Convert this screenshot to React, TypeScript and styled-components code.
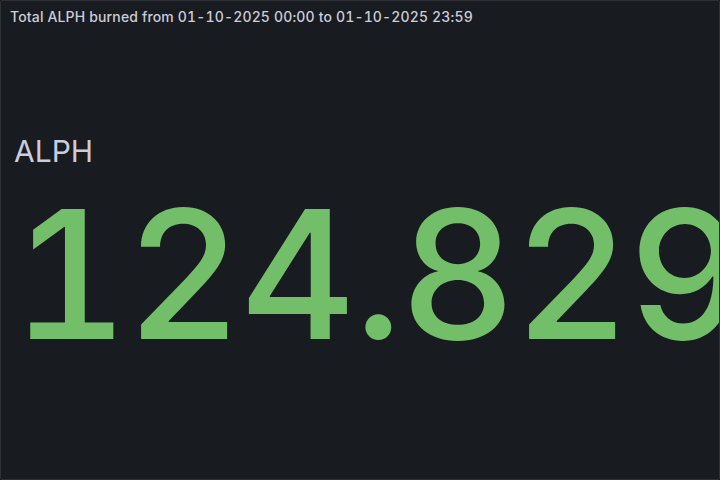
import styled, { createGlobalStyle } from "styled-components";

const GlobalStyle = createGlobalStyle`
  html, body {
    margin: 0;
    padding: 0;
    background: #111217;
  }
  body {
    font-family: Inter, "Noto Sans", sans-serif;
  }
`;

const App = () => {
  return (
    <>
      <GlobalStyle />
      <Panel>
        <PanelHeader>
          <PanelTitle>Total ALPH burned from 01-10-2025 00:00 to 01-10-2025 23:59</PanelTitle>
        </PanelHeader>
        <PanelContent>
          <StatLabel>ALPH</StatLabel>
          <StatValue>124.829</StatValue>
        </PanelContent>
      </Panel>
    </>
  );
};

export default App;

const Panel = styled.div`
  width: 720px;
  height: 480px;
  box-sizing: border-box;
  background: #181b1f;
  border: 1px solid rgba(204, 204, 220, 0.12);
  border-radius: 2px;
  display: flex;
  flex-direction: column;
  overflow: hidden;
`;

const PanelHeader = styled.div`
  height: 31px;
  display: flex;
  align-items: center;
  padding: 0 9px;
`;

const PanelTitle = styled.h2`
  margin: 0;
  font-size: 14px;
  font-weight: 500;
  letter-spacing: 0.15px;
  color: #ccccdc;
  font-variant-numeric: tabular-nums;
  white-space: nowrap;
`;

const PanelContent = styled.div`
  flex: 1;
  display: flex;
  flex-direction: column;
  padding: 100px 0 0 13px;
`;

const StatLabel = styled.div`
  font-size: 30px;
  line-height: 38px;
  color: #ccccdc;
  white-space: nowrap;
`;

const StatValue = styled.div`
  margin-top: 4px;
  margin-left: -2px;
  font-size: 179px;
  line-height: 200px;
  font-weight: 500;
  color: #73bf69;
  font-variant-numeric: tabular-nums;
  letter-spacing: -2px;
  white-space: nowrap;
`;
